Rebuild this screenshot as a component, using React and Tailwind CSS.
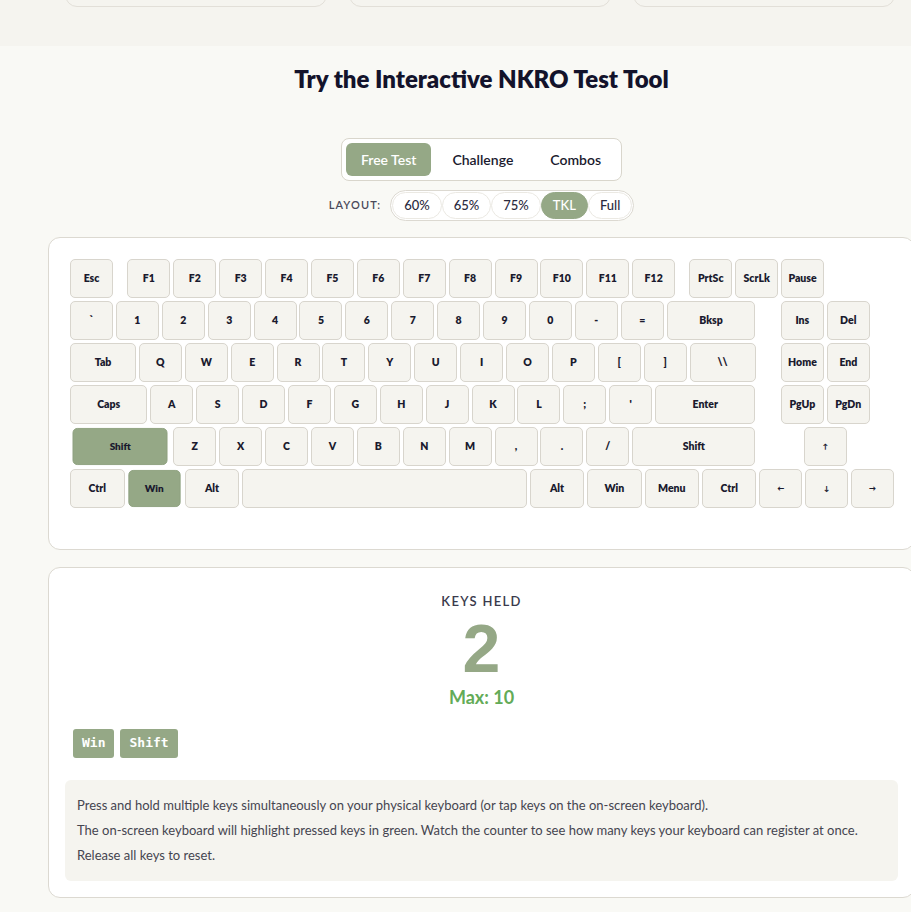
import React from 'react';

// key widths in px (unit 43px, gap 2.9px)
const W = {
  1: 'w-[43px]',
  1.25: 'w-[54.5px]',
  1.5: 'w-[66px]',
  1.75: 'w-[77.4px]',
  2: 'w-[88.9px]',
  2.25: 'w-[100.4px]',
  2.75: 'w-[123.3px]',
  6.25: 'w-[284.7px]',
};

const rows = [
  [
    { l: 'Esc' },
    { l: 'F1', cls: 'ml-[11.5px]' }, { l: 'F2' }, { l: 'F3' }, { l: 'F4' }, { l: 'F5' }, { l: 'F6' },
    { l: 'F7' }, { l: 'F8' }, { l: 'F9' }, { l: 'F10' }, { l: 'F11' }, { l: 'F12' },
    { l: 'PrtSc', cls: 'ml-[11.2px]' }, { l: 'ScrLk' }, { l: 'Pause' },
  ],
  [
    { l: '`' }, { l: '1' }, { l: '2' }, { l: '3' }, { l: '4' }, { l: '5' }, { l: '6' }, { l: '7' },
    { l: '8' }, { l: '9' }, { l: '0' }, { l: '-' }, { l: '=' }, { l: 'Bksp', w: 2 },
    { l: 'Ins', cls: 'ml-[22.5px]' }, { l: 'Del' },
  ],
  [
    { l: 'Tab', w: 1.5 }, { l: 'Q' }, { l: 'W' }, { l: 'E' }, { l: 'R' }, { l: 'T' }, { l: 'Y' },
    { l: 'U' }, { l: 'I' }, { l: 'O' }, { l: 'P' }, { l: '[' }, { l: ']' }, { l: '\\\\', w: 1.5 },
    { l: 'Home', cls: 'ml-[22.5px]' }, { l: 'End' },
  ],
  [
    { l: 'Caps', w: 1.75 }, { l: 'A' }, { l: 'S' }, { l: 'D' }, { l: 'F' }, { l: 'G' }, { l: 'H' },
    { l: 'J' }, { l: 'K' }, { l: 'L' }, { l: ';' }, { l: "'" }, { l: 'Enter', w: 2.25 },
    { l: 'PgUp', cls: 'ml-[22.5px]' }, { l: 'PgDn' },
  ],
  [
    { l: 'Shift', w: 2.25, on: true }, { l: 'Z' }, { l: 'X' }, { l: 'C' }, { l: 'V' }, { l: 'B' },
    { l: 'N' }, { l: 'M' }, { l: ',' }, { l: '.' }, { l: '/' }, { l: 'Shift', w: 2.75 },
    { l: '↑', cls: 'ml-[45.5px]', small: true },
  ],
  [
    { l: 'Ctrl', w: 1.25 }, { l: 'Win', w: 1.25, on: true }, { l: 'Alt', w: 1.25 }, { l: '', w: 6.25 },
    { l: 'Alt', w: 1.25 }, { l: 'Win', w: 1.25 }, { l: 'Menu', w: 1.25 }, { l: 'Ctrl', w: 1.25 },
    { l: '←', small: true }, { l: '↓', small: true }, { l: '→', small: true },
  ],
];

const Key = ({ label, w = 1, on, small, cls = '' }) => (
  <div
    className={`${W[w]} h-[39px] shrink-0 flex items-center justify-center rounded-[5px] border font-extrabold text-[#1a1a2e] ${
      small ? 'text-[7px]' : 'text-[10.5px]'
    } ${on ? 'bg-[#95a886] border-[#8ea17f] scale-95' : 'bg-[#f5f4ef] border-[#d8d5cd]'} ${cls}`}
  >
    {label}
  </div>
);

const layouts = ['60%', '65%', '75%', 'TKL', 'Full'];

export default function App() {
  return (
    <div className="w-full min-h-[912px] overflow-hidden bg-[#f9f9f5] font-['Lato',sans-serif] text-[#1a1a2e]">
      {/* tail of the section above */}
      <div className="h-[46px] bg-[#f5f4ef] pl-[65px]">
        <div className="flex gap-[22px]">
          {[0, 1, 2].map((i) => (
            <div key={i} className="w-[262px] h-[30px] -mt-[23px] shrink-0 rounded-xl border border-[#e2dfd8] bg-[#f5f4ef]" />
          ))}
        </div>
      </div>

      <div className="pl-[48px]">
        <div className="w-[867px]">
          <h2 className="pt-[17px] text-center text-[24px] leading-8 font-extrabold text-[#13132b]">
            Try the Interactive NKRO Test Tool
          </h2>

          {/* Mode tabs */}
          <div className="mt-[43px] flex justify-center">
            <div className="flex gap-[5px] rounded-lg border border-[#d9d6cc] bg-white p-1">
              <button className="h-[33px] px-[15px] rounded-md bg-[#95a886] text-[14px] font-semibold text-white">Free Test</button>
              <button className="h-[33px] px-[16px] rounded-md text-[14px] font-semibold text-[#1a1a2e]">Challenge</button>
              <button className="h-[33px] px-[16px] rounded-md text-[14px] font-semibold text-[#1a1a2e]">Combos</button>
            </div>
          </div>

          {/* Layout selector */}
          <div className="mt-[9px] flex items-center justify-center gap-[9px]">
            <span className="text-[11px] font-semibold tracking-[0.1em] text-[#4a4a5a]">LAYOUT:</span>
            <div className="flex items-center rounded-full border border-[#dcd9d1] bg-white p-px">
              {layouts.map((l) => (
                <div
                  key={l}
                  className={`h-[27px] px-[11px] flex items-center rounded-full border text-[13px] font-medium ${
                    l === 'TKL' ? 'bg-[#95a886] border-[#95a886] text-white font-bold' : 'bg-white border-[#ebe9e3] text-[#2a2a3e]'
                  }`}
                >
                  {l}
                </div>
              ))}
            </div>
          </div>

          {/* Keyboard */}
          <div className="mt-[16px] rounded-xl border border-[#dcd9d1] bg-white pt-[21px] pl-[21px] pb-[41px]">
            <div className="flex flex-col gap-[3px]">
              {rows.map((row, ri) => (
                <div key={ri} className="flex gap-[2.9px]">
                  {row.map((k, ki) => (
                    <Key key={ki} label={k.l} w={k.w} on={k.on} small={k.small} cls={k.cls} />
                  ))}
                </div>
              ))}
            </div>
          </div>

          {/* Counter + info */}
          <div className="mt-[17px] rounded-xl border border-[#dcd9d1] bg-white p-4">
            <div className="pt-[8px] flex flex-col items-center">
              <div className="text-[13px] font-semibold tracking-[0.1em] text-[#3a3a4c]">KEYS HELD</div>
              <div className="-mt-[1.8px] font-['Liberation_Sans',sans-serif] text-[68px] leading-[76px] font-bold text-[#95a886]">2</div>
              <div className="text-[18px] leading-[22px] font-bold text-[#63ab57]">Max: 10</div>
            </div>
            <div className="mt-[21px] px-2 flex gap-[6px]">
              <span className="h-[29px] px-[9px] flex items-center rounded-[3px] bg-[#95a886] font-['DejaVu_Sans_Mono',monospace] text-[13px] font-bold text-white">Win</span>
              <span className="h-[29px] px-[9px] flex items-center rounded-[3px] bg-[#95a886] font-['DejaVu_Sans_Mono',monospace] text-[13px] font-bold text-white">Shift</span>
            </div>
            <div className="mt-[22px] rounded-md bg-[#f5f4ef] px-3 py-[13px] text-[13px] leading-[25px] text-[#45454f]">
              <p>Press and hold multiple keys simultaneously on your physical keyboard (or tap keys on the on-screen keyboard).</p>
              <p>The on-screen keyboard will highlight pressed keys in green. Watch the counter to see how many keys your keyboard can register at once.</p>
              <p>Release all keys to reset.</p>
            </div>
          </div>
        </div>
      </div>
    </div>
  );
}
